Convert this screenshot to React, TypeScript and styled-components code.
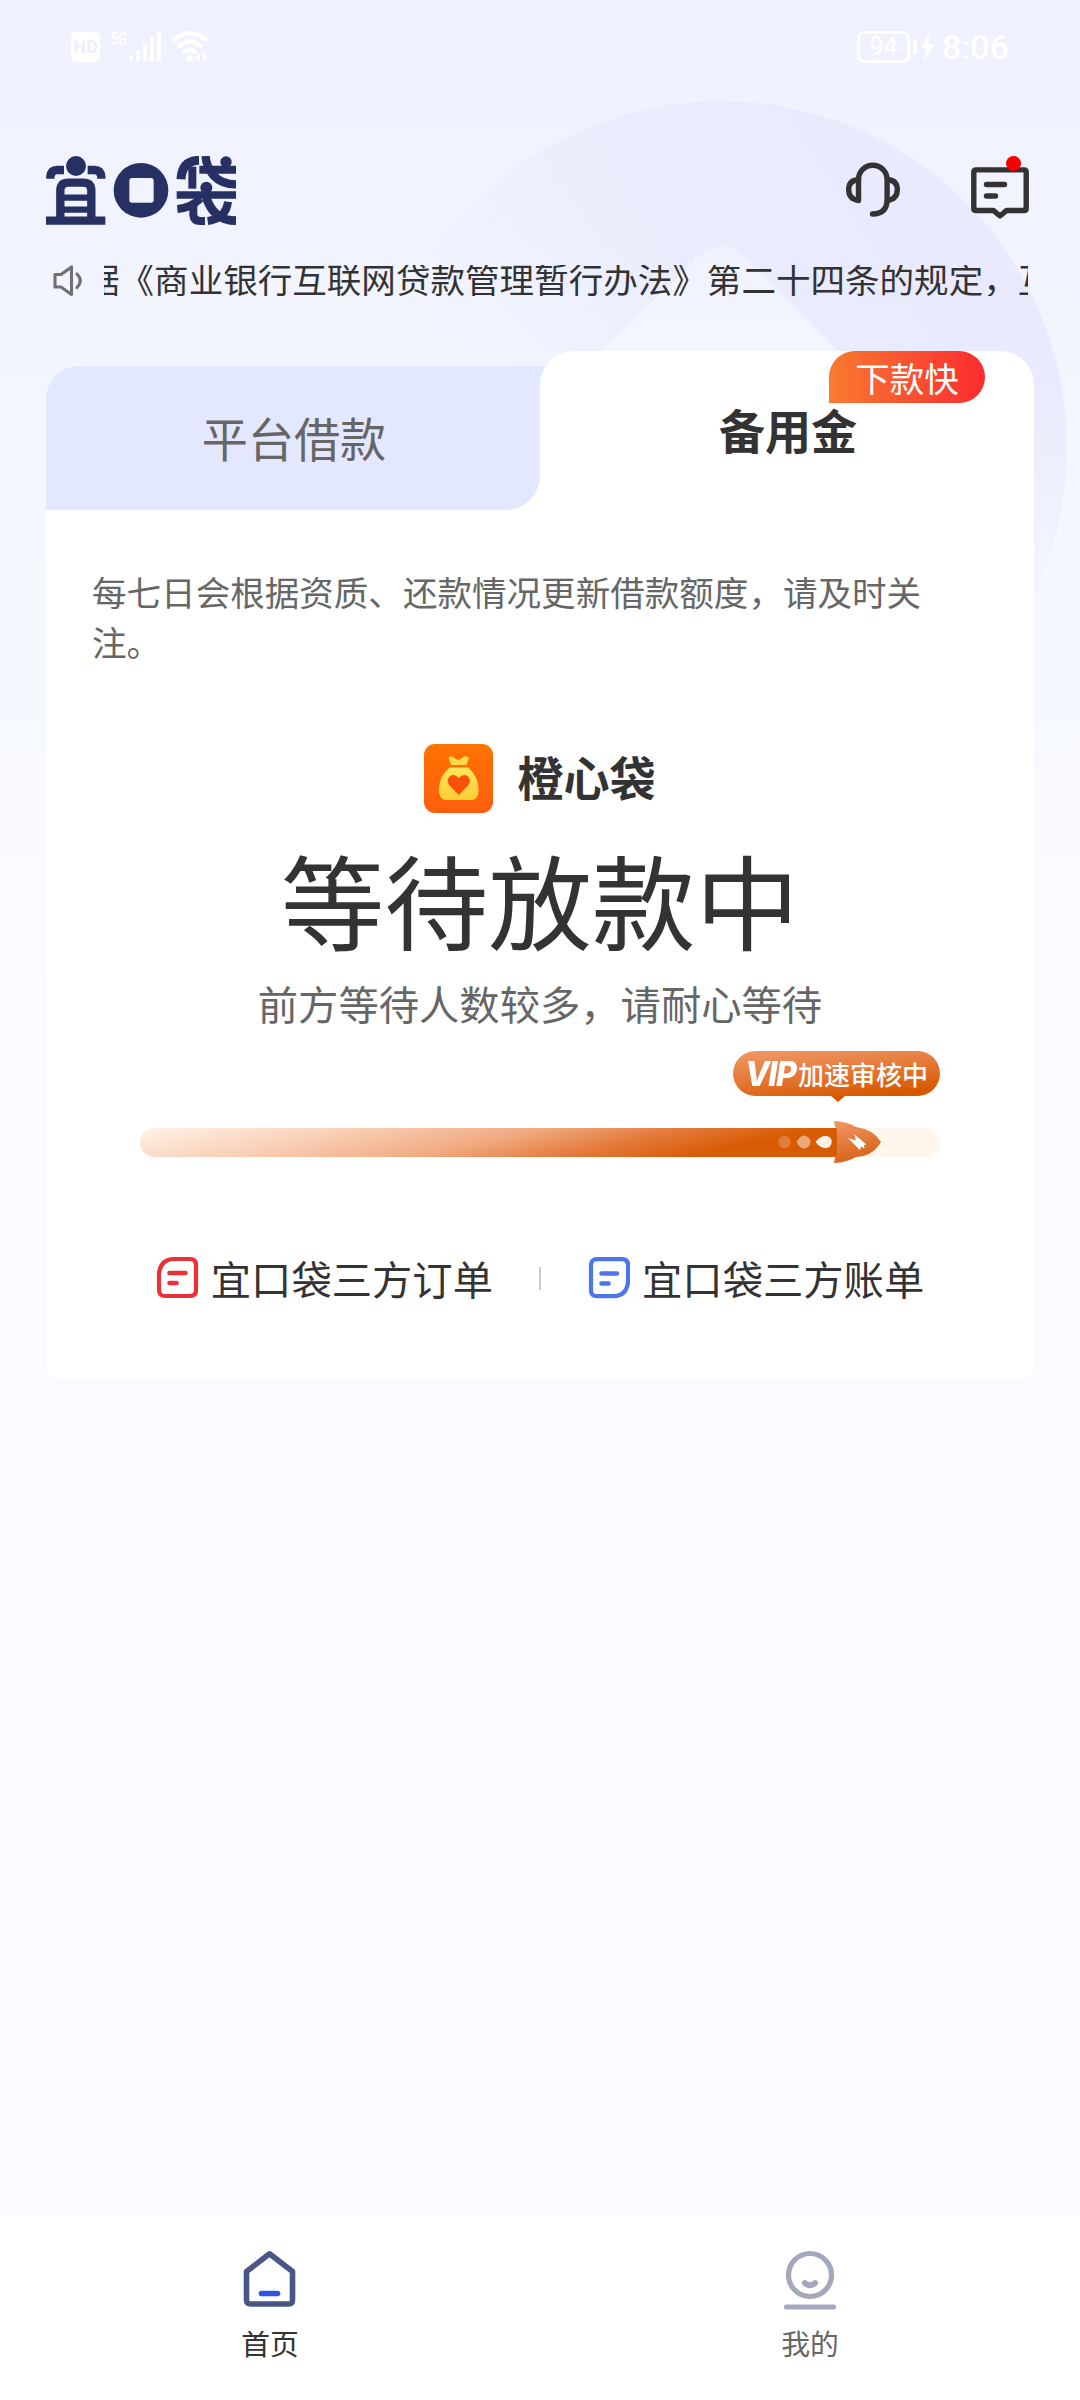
import React from "react";
import styled, { createGlobalStyle } from "styled-components";

const GlobalStyle = createGlobalStyle`
  html, body { margin: 0; padding: 0; }
  body {
    width: 1080px;
    font-family: "Noto Sans CJK SC", "Noto Sans", sans-serif;
    color: #333;
  }
  svg { display: block; flex: none; }
`;

const Page = styled.div`
  position: relative;
  display: flex;
  flex-direction: column;
  width: 1080px;
  height: 2400px;
  overflow: hidden;
  background: linear-gradient(180deg, #eff1fe 0px, #f1f3fe 230px, #f4f7ff 450px, #f6f8ff 700px, #fafbff 920px, #fafaff 1400px);
`;

const Backdrop = styled.svg`
  position: absolute;
  left: 0;
  top: 0;
  pointer-events: none;
`;

const StatusBar = styled.header`
  position: relative;
  display: flex;
  justify-content: space-between;
  align-items: center;
  height: 93px;
  padding: 0 71px 0 71px;
  box-sizing: border-box;
  color: #fff;
  font-family: Roboto, sans-serif;
`;

const StatusGroup = styled.div<{ $gap: number }>`
  display: flex;
  align-items: center;
  gap: ${(p) => p.$gap}px;
`;

const HdBadge = styled.span`
  display: flex;
  align-items: center;
  justify-content: center;
  width: 29px;
  height: 30px;
  border-radius: 5px;
  background: #fff;
  color: #eceefb;
  font-size: 18px;
  font-weight: 700;
`;

const Signal = styled.div`
  display: flex;
  align-items: flex-start;
  height: 31px;
`;

const NetworkType = styled.span`
  width: 18px;
  font-size: 19px;
  line-height: 15px;
  font-weight: 700;
  transform: scaleX(0.67);
  transform-origin: left;
`;

const Battery = styled.span`
  display: flex;
  align-items: center;
  justify-content: center;
  width: 53px;
  height: 32px;
  box-sizing: border-box;
  border: 3px solid #fff;
  border-radius: 7px;
  font-size: 25px;
  line-height: 26px;
`;

const BatteryCap = styled.span`
  width: 4px;
  height: 15px;
  border-radius: 2px;
  background: #fff;
`;

const Clock = styled.span`
  font-size: 34px;
  line-height: 34px;
  font-weight: 500;
  margin-left: 4px;
`;

const TopBar = styled.div`
  position: relative;
  display: flex;
  justify-content: space-between;
  align-items: center;
  height: 69px;
  margin: 63px 46px 0 46px;
  padding-right: 5px;
`;

const TopActions = styled.div`
  display: flex;
  align-items: center;
  gap: 71px;
`;

const MessageButton = styled.div`
  position: relative;
  display: flex;
  margin-top: 4px;
`;

const UnreadDot = styled.span`
  position: absolute;
  top: -11px;
  right: 8px;
  width: 15px;
  height: 15px;
  border-radius: 50%;
  background: #f90000;
`;

const Notice = styled.div`
  position: relative;
  display: flex;
  align-items: center;
  height: 31px;
  margin: 40px 52px 0 53px;
  gap: 21px;
`;

const NoticeClip = styled.div`
  flex: 1;
  display: flex;
  align-items: center;
  height: 31px;
  overflow: hidden;
`;

const NoticeText = styled.span`
  flex: none;
  margin: -4px 0 0 -19px;
  white-space: nowrap;
  font-size: 34.56px;
  line-height: 31px;
`;

const Tabs = styled.div`
  position: relative;
  display: flex;
  align-items: flex-end;
  margin: 55px 46px 0 46px;
`;

const IdleTabSlot = styled.div`
  width: 500px;
  height: 144px;
  border-radius: 34px 0 0 0;
  background: linear-gradient(180deg, #e3e8fe 0 72px, #fff 72px);
`;

const IdleTab = styled.div`
  display: flex;
  align-items: center;
  justify-content: center;
  width: 494px;
  height: 144px;
  padding: 0 0 3px 2px;
  box-sizing: border-box;
  border-radius: 34px 0 34px 0;
  background: #e3e8fe;
  color: #666;
  font-size: 46.08px;
`;

const ActiveTab = styled.div`
  position: relative;
  display: flex;
  align-items: center;
  justify-content: center;
  flex: 1;
  height: 159px;
  margin-left: -6px;
  padding: 0 0 3px 2px;
  box-sizing: border-box;
  border-radius: 34px 34px 0 0;
  background: #fff;
  font-size: 46.08px;
  font-weight: 700;
`;

const Ribbon = styled.span`
  position: absolute;
  top: 0;
  right: 49px;
  display: flex;
  align-items: center;
  justify-content: center;
  width: 156px;
  height: 52px;
  border-radius: 26px 26px 26px 0;
  background: linear-gradient(90deg, #f97a31, #fb2c31);
  color: #fff;
  font-size: 34.56px;
  line-height: 52px;
  font-weight: 400;
`;

const Card = styled.main`
  position: relative;
  display: flex;
  flex-direction: column;
  align-items: center;
  height: 869px;
  margin: 0 46px;
  padding: 56px 46px 0;
  box-sizing: border-box;
  border-radius: 0 0 12px 12px;
  background: #fff;
`;

const Tip = styled.p`
  width: 896px;
  margin: 0;
  color: #666;
  font-size: 34.56px;
  line-height: 50px;
`;

const Product = styled.div`
  display: flex;
  align-items: center;
  gap: 24px;
  height: 69px;
  margin-top: 78px;
`;

const ProductName = styled.span`
  padding-bottom: 5px;
  font-size: 46.08px;
  line-height: 64px;
  font-weight: 700;
`;

const Status = styled.h1`
  margin: 10px 0 0;
  font-size: 103.68px;
  line-height: 150px;
  font-weight: 400;
`;

const Hint = styled.p`
  margin: 1px 0 0;
  color: #666;
  font-size: 40.32px;
  line-height: 58px;
`;

const Progress = styled.div`
  display: flex;
  flex-direction: column;
  align-items: flex-end;
  width: 800px;
  margin-top: 19px;
`;

const VipBubble = styled.div`
  position: relative;
  display: flex;
  align-items: center;
  gap: 2px;
  width: 207px;
  height: 45px;
  padding-left: 12px;
  box-sizing: border-box;
  border-radius: 23px;
  background: linear-gradient(174deg, #f19a68 0%, #e57a3a 45%, #d85800 88%);
  color: #fff;
  font-size: 26px;
  line-height: 45px;
  font-weight: 500;
  white-space: nowrap;

  &::after {
    content: "";
    position: absolute;
    left: 98px;
    top: 45px;
    border: 7px solid transparent;
    border-top: 6px solid #d85800;
    border-bottom: 0;
  }
`;

const VipMark = styled.span`
  width: 51px;
  font-family: Inter, Roboto, sans-serif;
  font-size: 34px;
  font-style: italic;
  font-weight: 800;
  letter-spacing: -1.5px;
  transform: scaleX(0.94);
  transform-origin: left;
`;

const Track = styled.div`
  position: relative;
  width: 800px;
  height: 29px;
  margin-top: 32px;
  border-radius: 15px;
  background: #fff6ed;
`;

const Fill = styled.div`
  width: 705px;
  height: 29px;
  border-radius: 15px 0 0 15px;
  background: linear-gradient(167deg, #fff2e8 0%, #fad2ba 24%, #f1ab82 48%, #e4793a 66%, #d85a02 82%, #d85a02 100%);
`;

const Rocket = styled.svg`
  position: absolute;
  left: 636px;
  top: -8px;
`;

const Links = styled.nav`
  display: flex;
  align-items: center;
  justify-content: center;
  gap: 46px;
  height: 58px;
  margin-top: 92px;
`;

const LinkItem = styled.a`
  display: flex;
  align-items: center;
  gap: 12px;
  font-size: 40.32px;
  line-height: 58px;
  white-space: nowrap;
`;

const Divider = styled.span`
  width: 2px;
  height: 23px;
  margin-top: 0;
  background: #ccc;
`;

const LinkText = styled.span`
  padding-top: 0;
`;

const BottomNav = styled.footer`
  position: relative;
  display: flex;
  height: 184px;
  margin-top: auto;
  background: #fff;
`;

const NavItem = styled.a<{ $active?: boolean }>`
  flex: 1;
  display: flex;
  flex-direction: column;
  align-items: center;
  padding-top: 31px;
  color: ${(p) => (p.$active ? "#333" : "#666")};
  font-size: 28.8px;
  line-height: 42px;
  gap: 6px;
`;

const NAVY = "#263063";

function BackdropArt() {
  return (
    <Backdrop width="1080" height="900" viewBox="0 0 1080 900">
      <defs>
        <linearGradient id="coin" gradientUnits="userSpaceOnUse" x1="840" y1="190" x2="480" y2="420">
          <stop offset="0" stopColor="#e9eafd" />
          <stop offset="0.45" stopColor="#eaecfd" stopOpacity="0.9" />
          <stop offset="1" stopColor="#eef0fe" stopOpacity="0" />
        </linearGradient>
        <linearGradient id="coinFade" x1="0" y1="0" x2="0" y2="1">
          <stop offset="0.4" stopColor="#fff" />
          <stop offset="0.76" stopColor="#fff" stopOpacity="0" />
        </linearGradient>
        <mask id="coinMask">
          <circle cx="721" cy="447" r="346" fill="url(#coinFade)" />
        </mask>
        <linearGradient id="hole" gradientUnits="userSpaceOnUse" x1="0" y1="240" x2="0" y2="350">
          <stop offset="0" stopColor="#eff1fe" />
          <stop offset="1" stopColor="#f4f6ff" />
        </linearGradient>
      </defs>
      <g mask="url(#coinMask)">
        <rect x="375" y="101" width="692" height="692" fill="url(#coin)" />
        <path d="M560 393 L700 255 Q721 237 742 255 L885 398 V450 H560 Z" fill="url(#hole)" />
      </g>
    </Backdrop>
  );
}

function SignalBars() {
  return (
    <svg width="32" height="31" viewBox="0 0 32 31" fill="#fff">
      <rect x="0" y="25" width="4" height="5" rx="1" />
      <rect x="7" y="19" width="4" height="11" rx="1" />
      <rect x="14" y="13" width="4" height="17" rx="1" />
      <rect x="21" y="6" width="4" height="24" rx="1" />
      <rect x="28" y="0" width="4" height="30" rx="1" />
    </svg>
  );
}

function WifiIcon() {
  return (
    <svg width="37" height="32" viewBox="0 0 37 32" fill="none" stroke="#fff" strokeWidth="4.2" strokeLinecap="round">
      <path d="M2.5 8.5 Q18 -4 33.500 8.500" />
      <path d="M7.500 15 Q18 6 28.500 15" />
      <path d="M12.500 21 Q18 16.500 23.500 21" />
      <circle cx="18" cy="27.500" r="3.200" fill="#fff" stroke="none" />
      <path d="M28 22 V31 L23.500 27.500 Z M31 21 V31 L36 26 Z" fill="#fff" stroke="none" />
    </svg>
  );
}

function Bolt() {
  return (
    <svg width="15" height="30" viewBox="0 0 15 30" fill="#fff">
      <path d="M10 0 L1 16 H6.500 L4 30 L14 12 H8.500 Z" />
    </svg>
  );
}

function BrandLogo() {
  return (
    <svg width="190" height="69" viewBox="18 18 570 207" fill="none" stroke={NAVY} strokeWidth="25">
      <g>
        <circle cx="108" cy="48" r="30" fill={NAVY} stroke="none" />
        <path d="M31 86 V80 Q33 60 52 60 H72 M184 86 V80 Q182 60 163 60 H143" />
        <path d="M61 205 V120 Q62 98 86 98 H129 Q153 98 154 120 V205" />
        <path d="M65 143 H150 M65 179 H150" strokeWidth="19" />
        <path d="M18 212 H196" />
      </g>
      <path
        d="M303 39 A82 82 0 1 0 303 203 A82 82 0 1 0 303 39 Z M276 84 H333 Q341 84 341 92 V150 Q341 158 333 158 H276 Q268 158 268 150 V92 Q268 84 276 84 Z"
        fill={NAVY}
        fillRule="evenodd"
        stroke="none"
      />
      <g>
        <path d="M423 88 Q426 32 477 31" strokeWidth="27" />
        <path d="M457 50 V116" strokeWidth="24" />
        <path d="M497 18 Q498 48 520 76 Q545 103 588 103" strokeWidth="25" />
        <path d="M478 59 H588" strokeWidth="24" />
        <circle cx="558" cy="36" r="17" fill={NAVY} stroke="none" />
        <circle cx="499" cy="113" r="18" fill={NAVY} stroke="none" />
        <path d="M410 135 H588" strokeWidth="23" />
        <path d="M412 177 Q452 174 482 145" strokeWidth="24" />
        <path d="M460 160 V196 Q462 213 480 213 H495" strokeWidth="24" />
        <path d="M498 140 Q520 212 588 212" strokeWidth="26" />
        <path d="M564 155 Q558 205 503 213" strokeWidth="24" />
      </g>
    </svg>
  );
}

function HeadsetIcon() {
  return (
    <svg width="54" height="58" viewBox="0 0 54 58" fill="none" stroke="#333" strokeWidth="5.4" strokeLinecap="round" strokeLinejoin="round">
      <path d="M12.500 37.500 V17.500 A14.300 14.300 0 0 1 41.100 17.500 V37.500 Q41 52 26.500 52" />
      <path d="M12.500 17.500 Q2.700 18.500 2.700 27.500 Q2.700 37 12.500 38.500" />
      <path d="M41.500 17.500 Q51.300 18.500 51.300 27.500 Q51.300 37 41.500 38.500" />
    </svg>
  );
}

function MessageIcon() {
  return (
    <svg width="58" height="52" viewBox="0 0 58 52" fill="none" stroke="#333" strokeWidth="5.4" strokeLinecap="round" strokeLinejoin="round">
      <path d="M5 2.900 H53 Q55.200 2.900 55.200 5 V41.500 Q55.200 43.500 53 43.500 H35.500 L29 49 L22.500 43.500 H5 Q2.800 43.500 2.800 41.500 V5 Q2.800 2.900 5 2.900 Z" />
      <path d="M15.500 17.500 H33.500 M15.500 29 H24.500" />
    </svg>
  );
}

function SpeakerIcon() {
  return (
    <svg width="30" height="31" viewBox="0 0 30 31" fill="none" stroke="#707070" strokeWidth="3.100" strokeLinejoin="round" strokeLinecap="round">
      <path d="M2 9.500 H8 L18.500 2 V29.500 L8 22 H2 Z" />
      <path d="M24 9 Q30.500 15.500 24 22.500" />
    </svg>
  );
}

function MoneyBagIcon() {
  return (
    <svg width="69" height="69" viewBox="0 0 69 69">
      <defs>
        <linearGradient id="tile" x1="0" y1="0" x2="0" y2="1">
          <stop offset="0" stopColor="#ff7300" />
          <stop offset="1" stopColor="#ff5e10" />
        </linearGradient>
        <linearGradient id="bag" x1="0" y1="0" x2="0" y2="1">
          <stop offset="0" stopColor="#ffe55a" />
          <stop offset="1" stopColor="#ffcf35" />
        </linearGradient>
      </defs>
      <rect width="69" height="69" rx="11" fill="url(#tile)" />
      <path d="M24.500 14 Q27 11 30 13.500 Q32 15.500 34.500 16 Q37 15 39 13.500 Q42.500 11 45 14 L42.500 21 H27 Z" fill="#ffd94c" />
      <path d="M25.500 23.500 H44 Q54 32 54.500 44 Q55 56 47 56 H22.500 Q14.500 56 15 44 Q15.500 32 25.500 23.500 Z" fill="url(#bag)" />
      <path d="M34.800 51 L26 42 Q21.500 37 25.500 32.500 Q30 29 34.800 34 Q39.500 29 44 32.500 Q48 37 43.500 42 Z" fill="#f8520a" />
    </svg>
  );
}

function RocketArt() {
  return (
    <Rocket width="108" height="44" viewBox="0 0 108 44">
      <defs>
        <linearGradient id="rocketBody" x1="0" y1="0" x2="0.300" y2="1">
          <stop offset="0" stopColor="#f09a68" />
          <stop offset="1" stopColor="#d86218" />
        </linearGradient>
      </defs>
      <circle cx="8.500" cy="22" r="6.300" fill="#fff" opacity="0.220" />
      <path d="M20.500 22 Q24 15.500 28 15.500 A6.500 6.500 0 0 1 28 28.500 Q24 28.500 20.500 22 Z" fill="#fff" opacity="0.480" />
      <path d="M39.500 22 Q44 16 49.500 15.800 A6.200 6.200 0 0 1 49.500 28.200 Q44 28 39.500 22 Z" fill="#fff3e8" />
      <path d="M58 1 Q71 1.500 80 7 Q97 9 105 22 Q97 36 80 37 Q71 42.500 58 43 Q58 38 61 34 V10 Q58 6 58 1 Z" fill="url(#rocketBody)" />
      <path d="M72 18 L80 20.500 L78.500 14.500 L90.500 24.500 L88 25 L88.500 28.500 L85 26.500 L84 30 Z" fill="#fff" />
    </Rocket>
  );
}

function OrderIcon() {
  return (
    <svg width="43" height="45" viewBox="0 0 43 45" fill="none" stroke="#ea3038" strokeLinecap="round" strokeWidth="4.200">
      <path d="M17 3 H34 Q40 3 40 9 V34 Q40 40 34 40 H9 Q3 40 3 34 V18 Q4 4 17 3 Z" />
      <path d="M13.500 17 H29.500 M13.500 27 H20.500" strokeWidth="4.600" />
    </svg>
  );
}

function BillIcon() {
  return (
    <svg width="43" height="45" viewBox="-1 0 43 45" fill="none" stroke="#4d76ea" strokeLinecap="round" strokeWidth="4.200">
      <path d="M9 3.200 H34 Q40 3.200 40 9.200 V25.700 Q39 39.200 26 40.200 H9 Q3 40.200 3 34.200 V9.200 Q3 3.200 9 3.200 Z" />
      <path d="M13.500 17.500 H29 M13.500 27.500 H20.500" strokeWidth="4.600" />
    </svg>
  );
}

function HomeIcon() {
  return (
    <svg width="60" height="69" viewBox="0.500 0 60 69" fill="none" strokeLinecap="round" strokeLinejoin="round" strokeWidth="5.600">
      <path d="M30 6.800 L53 24.500 V53 Q53 57 49 57 H11 Q7 57 7 53 V24.500 Z" stroke="#4a5686" />
      <path d="M22 46.500 H38" stroke="#2d55e3" />
    </svg>
  );
}

function ProfileIcon() {
  return (
    <svg width="60" height="69" viewBox="0 0 60 69" fill="none" stroke="#a3a8bd" strokeLinecap="round" strokeWidth="5.200">
      <circle cx="30" cy="28" r="21.500" />
      <path d="M24.800 36 Q30 40.500 35.200 36" strokeWidth="5.800" />
      <path d="M6.500 60 H53.500" />
    </svg>
  );
}

export default function App() {
  return (
    <Page>
      <GlobalStyle />
      <BackdropArt />
      <StatusBar>
        <StatusGroup $gap={11}>
          <HdBadge>HD</HdBadge>
          <Signal>
            <NetworkType>5G</NetworkType>
            <SignalBars />
          </Signal>
          <WifiIcon />
        </StatusGroup>
        <StatusGroup $gap={3}>
          <Battery>94</Battery>
          <BatteryCap />
          <Bolt />
          <Clock>8:06</Clock>
        </StatusGroup>
      </StatusBar>

      <TopBar>
        <BrandLogo />
        <TopActions>
          <HeadsetIcon />
          <MessageButton>
            <MessageIcon />
            <UnreadDot />
          </MessageButton>
        </TopActions>
      </TopBar>

      <Notice>
        <SpeakerIcon />
        <NoticeClip>
          <NoticeText>据《商业银行互联网贷款管理暂行办法》第二十四条的规定，互联网</NoticeText>
        </NoticeClip>
      </Notice>

      <Tabs>
        <IdleTabSlot>
          <IdleTab>平台借款</IdleTab>
        </IdleTabSlot>
        <ActiveTab>
          备用金
          <Ribbon>下款快</Ribbon>
        </ActiveTab>
      </Tabs>

      <Card>
        <Tip>每七日会根据资质、还款情况更新借款额度，请及时关注。</Tip>
        <Product>
          <MoneyBagIcon />
          <ProductName>橙心袋</ProductName>
        </Product>
        <Status>等待放款中</Status>
        <Hint>前方等待人数较多，请耐心等待</Hint>
        <Progress>
          <VipBubble>
            <VipMark>VIP</VipMark>
            加速审核中
          </VipBubble>
          <Track>
            <Fill />
            <RocketArt />
          </Track>
        </Progress>
        <Links>
          <LinkItem>
            <OrderIcon />
            <LinkText>宜口袋三方订单</LinkText>
          </LinkItem>
          <Divider />
          <LinkItem>
            <BillIcon />
            <LinkText>宜口袋三方账单</LinkText>
          </LinkItem>
        </Links>
      </Card>

      <BottomNav>
        <NavItem $active>
          <HomeIcon />
          首页
        </NavItem>
        <NavItem>
          <ProfileIcon />
          我的
        </NavItem>
      </BottomNav>
    </Page>
  );
}
